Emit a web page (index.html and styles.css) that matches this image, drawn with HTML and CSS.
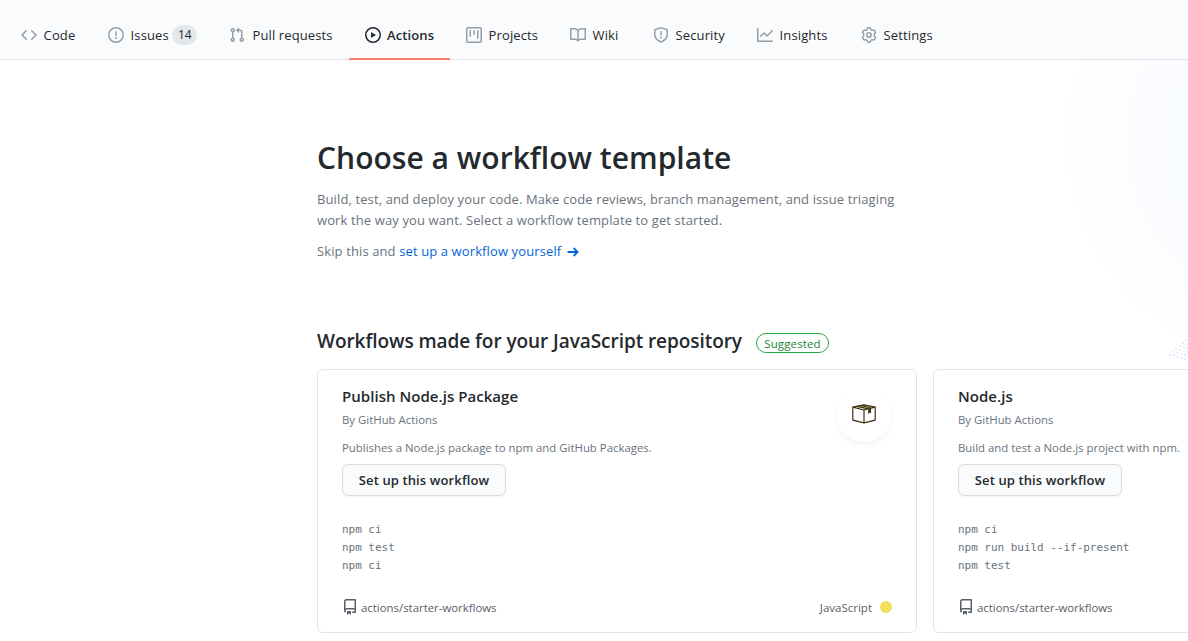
FILE: index.html
```
<!DOCTYPE html>
<html lang="en">
<head>
<meta charset="utf-8">
<title>Choose a workflow template</title>
<link rel="stylesheet" href="styles.css">
</head>
<body>
<nav class="repo-nav">
  <a class="tab code"><svg class="icon" viewBox="0 0 16 16"><path fill-rule="evenodd" d="M4.72 3.22a.75.75 0 011.06 1.06L2.06 8l3.72 3.72a.75.75 0 11-1.06 1.06L.47 8.53a.75.75 0 010-1.06l4.25-4.25zm6.56 0a.75.75 0 10-1.06 1.06L13.94 8l-3.72 3.72a.75.75 0 101.06 1.06l4.25-4.25a.75.75 0 000-1.06l-4.25-4.25z"/></svg><span>Code</span></a>
  <a class="tab issues"><svg class="icon" viewBox="0 0 16 16"><path fill-rule="evenodd" d="M8 1.5a6.5 6.5 0 100 13 6.5 6.5 0 000-13zM0 8a8 8 0 1116 0A8 8 0 010 8zm9 3a1 1 0 11-2 0 1 1 0 012 0zm-.25-6.25a.75.75 0 00-1.5 0v3.5a.75.75 0 001.5 0v-3.5z"/></svg><span>Issues</span><span class="counter">14</span></a>
  <a class="tab pulls"><svg class="icon" viewBox="0 0 16 16"><path fill-rule="evenodd" d="M7.177 3.073L9.573.677A.25.25 0 0110 .854v4.792a.25.25 0 01-.427.177L7.177 3.427a.25.25 0 010-.354zM3.75 2.5a.75.75 0 100 1.5.75.75 0 000-1.5zm-2.25.75a2.25 2.25 0 113 2.122v5.256a2.251 2.251 0 11-1.5 0V5.372A2.25 2.25 0 011.5 3.25zM11 2.5h-1V4h1a1 1 0 011 1v5.628a2.251 2.251 0 101.5 0V5A2.5 2.5 0 0011 2.5zm1 10.25a.75.75 0 111.5 0 .75.75 0 01-1.5 0zM3.75 12a.75.75 0 100 1.5.75.75 0 000-1.5z"/></svg><span>Pull requests</span></a>
  <a class="tab actions selected"><svg class="icon" viewBox="0 0 16 16"><path fill-rule="evenodd" d="M1.5 8a6.5 6.5 0 1113 0 6.5 6.5 0 01-13 0zM8 0a8 8 0 100 16A8 8 0 008 0zM6.379 5.227A.25.25 0 006 5.442v5.117a.25.25 0 00.379.214l4.264-2.559a.25.25 0 000-.428L6.379 5.227z"/></svg><span>Actions</span></a>
  <a class="tab projects"><svg class="icon" viewBox="0 0 16 16"><path fill-rule="evenodd" d="M1.75 0A1.75 1.75 0 000 1.75v12.5C0 15.216.784 16 1.75 16h12.5A1.75 1.75 0 0016 14.25V1.75A1.75 1.75 0 0014.25 0H1.75zM1.5 1.75a.25.25 0 01.25-.25h12.5a.25.25 0 01.25.25v12.5a.25.25 0 01-.25.25H1.75a.25.25 0 01-.25-.25V1.75zM11.75 3a.75.75 0 00-.75.75v7.5a.75.75 0 001.5 0v-7.5a.75.75 0 00-.75-.75zm-8.25.75a.75.75 0 011.5 0v5.5a.75.75 0 01-1.5 0v-5.5zM8 3a.75.75 0 00-.75.75v3.5a.75.75 0 001.5 0v-3.5A.75.75 0 008 3z"/></svg><span>Projects</span></a>
  <a class="tab wiki"><svg class="icon" viewBox="0 0 16 16"><path fill-rule="evenodd" d="M0 1.75A.75.75 0 01.75 1h4.253c1.227 0 2.317.59 3 1.501A3.744 3.744 0 0111.006 1h4.245a.75.75 0 01.75.75v10.5a.75.75 0 01-.75.75h-4.507a2.25 2.25 0 00-1.591.659l-.622.621a.75.75 0 01-1.06 0l-.622-.621A2.25 2.25 0 005.258 13H.75a.75.75 0 01-.75-.75V1.75zm8.755 3a2.25 2.25 0 012.25-2.25H14.5v9h-3.757c-.71 0-1.4.201-1.992.572l.004-7.322zm-1.504 7.324l.004-5.073-.002-2.253A2.25 2.25 0 005.003 2.5H1.5v9h3.757a3.75 3.75 0 011.994.574z"/></svg><span>Wiki</span></a>
  <a class="tab security"><svg class="icon" viewBox="0 0 16 16"><path fill-rule="evenodd" d="M7.467.133a1.75 1.75 0 011.066 0l5.25 1.68A1.75 1.75 0 0115 3.48V7c0 1.566-.32 3.182-1.303 4.682-.983 1.498-2.585 2.813-5.032 3.855a1.7 1.7 0 01-1.33 0c-2.447-1.042-4.049-2.357-5.032-3.855C1.32 10.182 1 8.566 1 7V3.48a1.75 1.75 0 011.217-1.667l5.25-1.68zm.61 1.429a.25.25 0 00-.153 0l-5.25 1.68a.25.25 0 00-.174.238V7c0 1.358.275 2.666 1.057 3.86.784 1.194 2.121 2.34 4.366 3.297a.2.2 0 00.154 0c2.245-.956 3.582-2.104 4.366-3.298C13.225 9.666 13.5 8.36 13.5 7V3.48a.25.25 0 00-.174-.237l-5.25-1.68zM9 10.5a1 1 0 11-2 0 1 1 0 012 0zm-.25-5.75a.75.75 0 10-1.5 0v3a.75.75 0 001.5 0v-3z"/></svg><span>Security</span></a>
  <a class="tab insights"><svg class="icon" viewBox="0 0 16 16"><path fill-rule="evenodd" d="M1.5 1.75a.75.75 0 00-1.5 0v12.5c0 .414.336.75.75.75h14.5a.75.75 0 000-1.5H1.5V1.75zm14.28 2.53a.75.75 0 00-1.06-1.06L10 7.94 7.53 5.47a.75.75 0 00-1.06 0L3.22 8.72a.75.75 0 001.06 1.06L7 7.06l2.47 2.47a.75.75 0 001.06 0l5.25-5.25z"/></svg><span>Insights</span></a>
  <a class="tab settings"><svg class="icon gear" viewBox="0 0 16 16"><circle cx="8" cy="8" r="2.2"/><path d="M8 .75q.6 0 1.1.1c.3.1.4.3.5.9.1.7.4 1 .9 1.3s.9.3 1.6.05c.5-.2.8-.2 1.1.1.5.6.9 1.3 1.2 2 .1.4 0 .6-.4 1-.6.5-.8.9-.8 1.8s.2 1.3.8 1.8c.4.4.5.6.4 1-.3.7-.7 1.4-1.2 2-.3.3-.6.3-1.1.1-.7-.25-1.1-.25-1.6.05s-.8.6-.9 1.3c-.1.6-.2.8-.5.9q-1.1.2-2.2 0c-.3-.1-.4-.3-.5-.9-.1-.7-.4-1-.9-1.3s-.9-.3-1.6-.05c-.5.2-.8.2-1.1-.1-.5-.6-.9-1.3-1.2-2-.1-.4 0-.6.4-1 .6-.5.8-.9.8-1.8s-.2-1.3-.8-1.8c-.4-.4-.5-.6-.4-1 .3-.7.7-1.4 1.2-2 .3-.3.6-.3 1.1-.1.7.25 1.1.25 1.6-.05s.8-.6.9-1.3c.1-.6.2-.8.5-.9q.5-.1 1.1-.1z"/></svg><span>Settings</span></a>
</nav>
<main class="content">
  <svg class="glow" viewBox="0 0 188 310" preserveAspectRatio="none">
    <defs><radialGradient id="haze" gradientUnits="userSpaceOnUse" cx="290" cy="80" r="230"><stop offset="0" stop-color="#f5f9ff"/><stop offset=".65" stop-color="#fafcff"/><stop offset=".8" stop-color="#fdfdfe"/><stop offset="1" stop-color="#fff"/></radialGradient></defs>
    <rect width="188" height="310" fill="url(#haze)"/>
    <g fill="#dfe7fb"><circle cx="170" cy="295" r="1"/><circle cx="174" cy="295.5" r="1"/><circle cx="178" cy="297" r="1"/><circle cx="182" cy="298" r="1"/><circle cx="185" cy="299" r="1"/><circle cx="173" cy="292" r="1"/><circle cx="177" cy="293" r="1"/><circle cx="181" cy="294" r="1"/><circle cx="185" cy="295" r="1"/><circle cx="176" cy="289" r="1"/><circle cx="180" cy="290" r="1"/><circle cx="184" cy="291" r="1"/><circle cx="187" cy="292" r="1"/><circle cx="180" cy="286" r="1"/><circle cx="184" cy="287" r="1"/><circle cx="187" cy="288" r="1"/><circle cx="183" cy="283" r="1"/><circle cx="187" cy="284" r="1"/><circle cx="186" cy="280" r="1"/></g>
  </svg>
  <header class="intro">
    <h1>Choose a workflow template</h1>
    <p>Build, test, and deploy your code. Make code reviews, branch management, and issue triaging<br>work the way you want. Select a workflow template to get started.</p>
    <p class="skip"><span>Skip this and <a>set up a workflow yourself</a></span><svg class="arrow" viewBox="0 0 12 12"><path d="M.5 6h10M6.6 2l4 4-4 4"/></svg></p>
  </header>
  <div class="section-head"><h2>Workflows made for your JavaScript repository</h2><span class="label">Suggested</span></div>
  <div class="cards">
    <article class="card">
      <div class="card-top">
        <div>
          <h3>Publish Node.js Package</h3>
          <p class="by">By GitHub Actions</p>
          <p class="desc">Publishes a Node.js package to npm and GitHub Packages.</p>
        </div>
        <div class="badge"><svg class="box" viewBox="0 0 24 20"><path d="M12 .8L.8 3.2v12.9L12 18.9l11.2-2.8V3.2zM.8 3.2L12 6l11.2-2.8M12 6v12.9M5 2.3l11.5 2.5M8.5 1.5L19.5 4"/><path class="solid" d="M16.2 4.8l2.8-.8v5.4l-1.4-.9-1.4 1.9z"/></svg></div>
      </div>
      <button class="btn">Set up this workflow</button>
      <pre>npm ci
npm test
npm ci</pre>
      <footer class="card-foot"><svg class="repo" viewBox="0 0 16 16"><path fill-rule="evenodd" d="M2 2.5A2.5 2.5 0 014.5 0h8.75a.75.75 0 01.75.75v12.5a.75.75 0 01-.75.75h-2.5a.75.75 0 110-1.5h1.75v-2h-8a1 1 0 00-.714 1.7.75.75 0 01-1.072 1.05A2.495 2.495 0 012 11.5v-9zm10.5-1V9h-8c-.356 0-.694.074-1 .208V2.5a1 1 0 011-1h8zM5 12.25v3.25a.25.25 0 00.4.2l1.45-1.087a.25.25 0 01.3 0L8.6 15.7a.25.25 0 00.4-.2v-3.25a.25.25 0 00-.25-.25h-3.5a.25.25 0 00-.25.25z"/></svg><span class="source">actions/starter-workflows</span><span class="lang">JavaScript</span><i class="dot"></i></footer>
    </article>
    <article class="card">
      <div class="card-top">
        <div>
          <h3>Node.js</h3>
          <p class="by">By GitHub Actions</p>
          <p class="desc">Build and test a Node.js project with npm.</p>
        </div>
      </div>
      <button class="btn">Set up this workflow</button>
      <pre>npm ci
npm run build --if-present
npm test</pre>
      <footer class="card-foot"><svg class="repo" viewBox="0 0 16 16"><path fill-rule="evenodd" d="M2 2.5A2.5 2.5 0 014.5 0h8.75a.75.75 0 01.75.75v12.5a.75.75 0 01-.75.75h-2.5a.75.75 0 110-1.5h1.75v-2h-8a1 1 0 00-.714 1.7.75.75 0 01-1.072 1.05A2.495 2.495 0 012 11.5v-9zm10.5-1V9h-8c-.356 0-.694.074-1 .208V2.5a1 1 0 011-1h8zM5 12.25v3.25a.25.25 0 00.4.2l1.45-1.087a.25.25 0 01.3 0L8.6 15.7a.25.25 0 00.4-.2v-3.25a.25.25 0 00-.25-.25h-3.5a.25.25 0 00-.25.25z"/></svg><span class="source">actions/starter-workflows</span></footer>
    </article>
  </div>
</main>
</body>
</html>
```
FILE: styles.css
```
* { box-sizing: border-box; }
body { margin: 0; width: 1188px; height: 641px; overflow: hidden; background: #fff; color: #24292e; font: 13px/21px "Open Sans", "Noto Sans", sans-serif; letter-spacing: .115px; }
h1, h2, h3, p { margin: 0; font-weight: 600; white-space: nowrap; }
p { font-weight: 400; }
.repo-nav { display: grid; grid-template-columns: 87px 121px 136px 101px 104px 83px 104px 104px 120px; height: 60px; padding: 10px 0 0 5px; background: #fafbfc; border-bottom: 1px solid #e1e4e8; }
.tab { display: flex; align-items: center; height: 50px; padding: 2px 0 0 16px; gap: 6.6px; white-space: nowrap; border-bottom: 2px solid transparent; }
.pulls { gap: 7.5px; }
.icon { width: 16px; height: 16px; flex: none; fill: #959da5; }
.gear { fill: none; stroke: #959da5; stroke-width: 1.5; }
.selected { gap: 6px; border-color: #f9826c; font-weight: 600; }
.selected .icon { fill: #24292e; }
.counter { background: #e5e8eb; border-radius: 10px; height: 20px; width: 25px; margin-left: -3px; font-size: 12px; line-height: 20px; text-align: center; }
.content { position: relative; height: 581px; overflow: hidden; padding: 78px 0 0 317px; }
.glow { position: absolute; z-index: -1; right: 0; top: 0; width: 188px; height: 310px; }
.intro { height: 188px; color: #6a737d; }
h1, h2, h3 { color: #24292e; }
h1 { font-size: 30px; line-height: 40px; margin-bottom: 11px; letter-spacing: .03px; }
.skip { display: flex; align-items: center; gap: 6px; margin-top: 10px; }
.skip a { color: #0366d6; }
.arrow { width: 12px; height: 12px; fill: none; stroke: #0366d6; stroke-width: 1.8; }
.section-head { display: flex; align-items: flex-start; gap: 14px; height: 43px; }
h2 { width: 425px; font-size: 19px; line-height: 30px; letter-spacing: -.06px; }
.label { width: 73px; height: 20px; margin-top: 7px; border: 1px solid #28a745; border-radius: 10px; color: #22863a; font-size: 11.5px; line-height: 19px; font-weight: 500; text-align: center; }
.cards { display: grid; grid-template-columns: 600px 600px; gap: 16px; }
.card { height: 264px; padding: 16px 24px 0; border: 1px solid #e1e4e8; border-radius: 6px; background: #fff; }
.card-top { display: flex; justify-content: space-between; height: 78px; }
h3 { font-size: 15px; line-height: 20px; letter-spacing: .04px; }
.by, .desc { color: #6a737d; font-size: 11.4px; line-height: 18px; letter-spacing: 0; }
.by { margin-top: 5px; }
.desc { margin-top: 10px; }
.badge { width: 56px; height: 56px; border-radius: 50%; box-shadow: 0 3px 5px rgba(27,31,35,.06); display: grid; place-items: center; }
.box { width: 24px; height: 20px; fill: none; stroke: #3d310d; stroke-width: 1.2; stroke-linejoin: round; }
.box .solid { fill: #3d310d; stroke: none; }
.btn { display: block; width: 164px; height: 32px; padding: 0; border: 1px solid #d9dcdf; border-radius: 6px; background: #fafbfc; color: #24292e; font: 600 13px/30px "Open Sans", sans-serif; letter-spacing: .12px; box-shadow: 0 1px 0 rgba(27,31,35,.04); white-space: nowrap; }
pre { height: 72px; margin: 25px 0 0; color: #6a737d; font: 11px/18px "DejaVu Sans Mono", monospace; letter-spacing: -.03px; white-space: pre; }
.card-foot { display: flex; align-items: center; height: 28px; color: #586069; font-size: 11.4px; letter-spacing: 0; }
.repo { width: 16px; height: 16px; fill: #586069; margin-right: 3px; flex: none; }
.lang { margin-left: auto; margin-right: 8px; font-size: 11.5px; }
.dot { width: 12px; height: 12px; border-radius: 50%; background: #f1e05a; }
```
